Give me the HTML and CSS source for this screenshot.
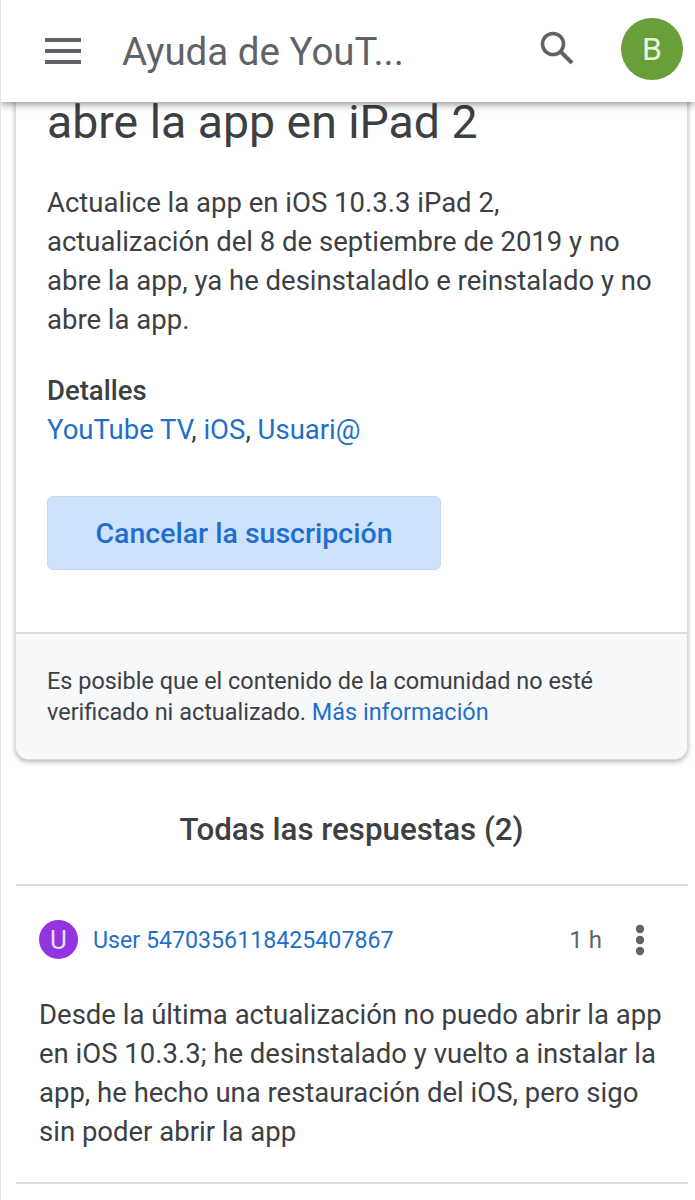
FILE: index.html
```html
<!DOCTYPE html>
<html lang="es">
<head>
  <meta charset="UTF-8">
  <meta name="viewport" content="width=device-width, initial-scale=1.0">
  <title>Ayuda de YouTube</title>
  <link rel="stylesheet" href="styles.css">
</head>
<body>
  <header class="topbar">
    <svg class="menu-icon" width="36" height="26" viewBox="0 0 36 26"><path d="M0 0h36v4H0zM0 11h36v4H0zM0 22h36v4H0z" fill="#5f6368"/></svg>
    <div class="topbar-title">Ayuda de YouT...</div>
    <svg class="search-icon" width="36" height="36" viewBox="0 0 36 36"><circle cx="14" cy="14" r="10.5" fill="none" stroke="#5f6368" stroke-width="3.6"/><path d="M21.5 21.5L33 33" stroke="#5f6368" stroke-width="4" fill="none"/></svg>
    <div class="avatar">B</div>
  </header>

  <section class="card">
    <div class="card-main">
      <h1 class="question-title">abre la app en iPad 2</h1>
      <p class="question-body">Actualice la app en iOS 10.3.3 iPad 2, actualización del 8 de septiembre de 2019 y no abre la app, ya he desinstaladlo e reinstalado y no abre la app.</p>
      <h2 class="details-title">Detalles</h2>
      <div class="details-links"><a href="#">YouTube TV</a>, <a href="#">iOS</a>, <a href="#">Usuari@</a></div>
      <button class="btn-cancel">Cancelar la suscripción</button>
    </div>
    <div class="card-foot">Es posible que el contenido de la comunidad no esté verificado ni actualizado. <a href="#">Más información</a></div>
  </section>

  <h2 class="answers-title">Todas las respuestas (2)</h2>

  <article class="answer">
    <div class="answer-head">
      <div class="user-avatar">U</div>
      <a class="user-name" href="#">User 5470356118425407867</a>
      <span class="answer-time">1 h</span>
      <svg class="more-icon" width="10" height="32" viewBox="0 0 10 32"><circle cx="5" cy="5" r="4.2" fill="#5f6368"/><circle cx="5" cy="16" r="4.2" fill="#5f6368"/><circle cx="5" cy="27" r="4.2" fill="#5f6368"/></svg>
    </div>
    <p class="answer-body">Desde la última actualización no puedo abrir la app en iOS 10.3.3; he desinstalado y vuelto a instalar la app, he hecho una restauración del iOS, pero sigo sin poder abrir la app</p>
  </article>
</body>
</html>
```

FILE: styles.css
```css
html, body {
  margin: 0;
  padding: 0;
}
body {
  font-family: Roboto, "Liberation Sans", sans-serif;
  background-color: #fff;
  color: #3c4043;
  height: 1200px;
  overflow: hidden;
  border-left: 1px solid #e4e4e4;
  box-sizing: border-box;
}
a {
  color: #1f6fc9;
  text-decoration: none;
}
.topbar {
  position: relative;
  z-index: 2;
  height: 102px;
  margin-left: -1px;
  background-color: #fff;
  box-shadow: 0 2px 8px rgba(0,0,0,0.45);
  display: flex;
  align-items: center;
}
.menu-icon {
  margin-left: 45px;
  flex: none;
}
.topbar-title {
  margin-left: 41px;
  flex: 1;
  font-size: 38.5px;
  color: #5f6368;
}
.search-icon {
  flex: none;
  margin-right: 46px;
  margin-top: -6px;
}
.avatar {
  flex: none;
  width: 62px;
  height: 62px;
  margin-right: 12px;
  margin-bottom: 4px;
  border-radius: 50%;
  background-color: #689f38;
  color: #e8f2dd;
  font-size: 32px;
  display: flex;
  align-items: center;
  justify-content: center;
}
.card {
  margin: -22px 7px 0 14px;
  background-color: #fff;
  border: 1px solid #dadce0;
  border-top: 0;
  border-radius: 0 0 14px 14px;
  box-shadow: 0 2px 5px rgba(0,0,0,0.3);
  overflow: hidden;
}
.card-main {
  padding: 16px 31px 62px;
  border-bottom: 2px solid #dadce0;
}
.question-title {
  margin: 0;
  font-size: 46.4px;
  font-weight: 400;
  line-height: 52px;
}
.question-body {
  margin: 35px 0 0;
  font-size: 27.5px;
  line-height: 39px;
}
.details-title {
  margin: 32px 0 0;
  font-size: 27.5px;
  font-weight: 500;
  line-height: 39px;
}
.details-links {
  font-size: 27.5px;
  line-height: 39px;
}
.btn-cancel {
  display: block;
  width: 394px;
  height: 74px;
  margin-top: 47px;
  padding: 0;
  background-color: #cfe2fb;
  border: 1px solid #c6d8ee;
  border-radius: 6px;
  color: #1f6fd1;
  font-family: Roboto, sans-serif;
  font-size: 28.5px;
  font-weight: 500;
}
.card-foot {
  background-color: #f7f8fa;
  padding: 32px 31px 31px;
  font-size: 23.45px;
  line-height: 31px;
}
.answers-title {
  margin: 50px 0 34px;
  padding-left: 7px;
  font-size: 31.3px;
  font-weight: 500;
  line-height: 40px;
  text-align: center;
}
.answer {
  margin: 0 7px 0 15px;
  padding: 34px 23px 31px;
  border-top: 2px solid #dadce0;
  border-bottom: 2px solid #dadce0;
}
.answer-head {
  display: flex;
  align-items: center;
}
.user-avatar {
  flex: none;
  width: 39px;
  height: 39px;
  border-radius: 50%;
  background-color: #9334e0;
  color: #eadcf8;
  font-size: 26px;
  display: flex;
  align-items: center;
  justify-content: center;
}
.user-name {
  margin-left: 15px;
  flex: 1;
  font-size: 23.2px;
}
.answer-time {
  font-size: 24px;
  color: #5f6368;
}
.more-icon {
  flex: none;
  margin-left: 33px;
  margin-right: 20px;
}
.answer-body {
  margin: 36px 0 0;
  font-size: 27.5px;
  line-height: 39px;
}
```
